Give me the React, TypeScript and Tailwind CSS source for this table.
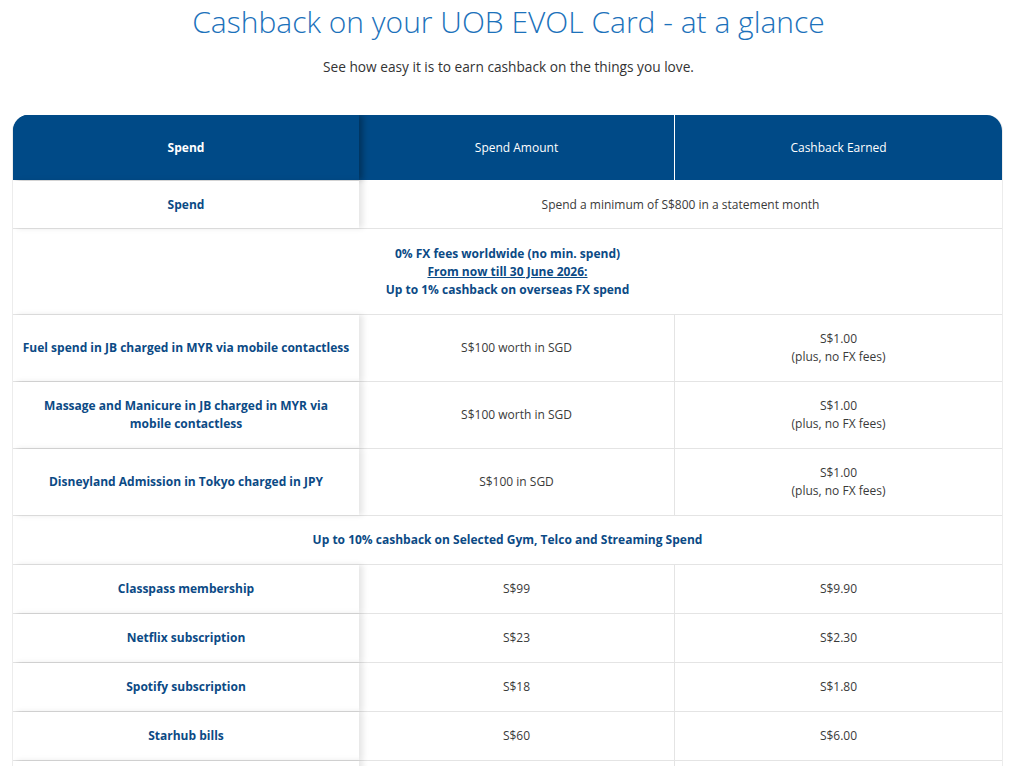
const font = { fontFamily: '"Open Sans", "Noto Sans", sans-serif' };

type Row =
  | { kind: 'split'; label: string; amount: string; earned: string[]; h: string }
  | { kind: 'wide'; label?: string; body: React.ReactNode; h: string };

const rows: Row[] = [
  {
    kind: 'wide',
    label: 'Spend',
    body: 'Spend a minimum of S$800 in a statement month',
    h: 'h-[49px] pt-[1px]',
  },
  {
    kind: 'wide',
    body: (
      <div className="font-bold text-[#0b4a85] leading-[18px]">
        <div>0% FX fees worldwide (no min. spend)</div>
        <div className="underline">From now till 30 June 2026:</div>
        <div>Up to 1% cashback on overseas FX spend</div>
      </div>
    ),
    h: 'h-[86px]',
  },
  {
    kind: 'split',
    label: 'Fuel spend in JB charged in MYR via mobile contactless',
    amount: 'S$100 worth in SGD',
    earned: ['S$1.00', '(plus, no FX fees)'],
    h: 'h-[67px]',
  },
  {
    kind: 'split',
    label: 'Massage and Manicure in JB charged in MYR via mobile contactless',
    amount: 'S$100 worth in SGD',
    earned: ['S$1.00', '(plus, no FX fees)'],
    h: 'h-[67px]',
  },
  {
    kind: 'split',
    label: 'Disneyland Admission in Tokyo charged in JPY',
    amount: 'S$100 in SGD',
    earned: ['S$1.00', '(plus, no FX fees)'],
    h: 'h-[67px]',
  },
  {
    kind: 'wide',
    body: (
      <div className="font-bold text-[#0b4a85]">
        Up to 10% cashback on Selected Gym, Telco and Streaming Spend
      </div>
    ),
    h: 'h-[49px]',
  },
  { kind: 'split', label: 'Classpass membership', amount: 'S$99', earned: ['S$9.90'], h: 'h-[49px]' },
  { kind: 'split', label: 'Netflix subscription', amount: 'S$23', earned: ['S$2.30'], h: 'h-[49px]' },
  { kind: 'split', label: 'Spotify subscription', amount: 'S$18', earned: ['S$1.80'], h: 'h-[49px]' },
  { kind: 'split', label: 'Starhub bills', amount: 'S$60', earned: ['S$6.00'], h: 'h-[49px]' },
];

function TableRow({ row }: { row: Row }) {
  if (row.kind === 'wide' && !row.label) {
    return (
      <div
        className={`${row.h} flex items-center justify-center border-b border-[#e4e4e4] text-center text-[12px]`}
      >
        {row.body}
      </div>
    );
  }
  if (row.kind === 'wide') {
    return (
      <div className={`${row.h} flex border-b border-[#e4e4e4] text-[12px]`}>
        <div className="relative z-10 flex w-[346px] items-center justify-center bg-white px-[9px] text-center font-bold text-[#0b4a85] shadow-[4px_0_6px_rgba(0,0,0,0.1)]">
          {row.label}
        </div>
        <div className="flex flex-1 items-center justify-center text-center text-[#3a3a3a]">
          {row.body}
        </div>
      </div>
    );
  }
  return (
    <div className={`${row.h} flex border-b border-[#e4e4e4] text-[12px]`}>
      <div className="relative z-10 flex w-[346px] items-center justify-center bg-white px-[9px] text-center font-bold leading-[18px] text-[#0b4a85] shadow-[4px_0_6px_rgba(0,0,0,0.1)]">
        {row.label}
      </div>
      <div className="flex w-[315px] items-center justify-center text-center text-[#3a3a3a]">
        {row.amount}
      </div>
      <div className="flex flex-1 flex-col items-center justify-center border-l border-[#e4e4e4] text-center leading-[18px] text-[#3a3a3a]">
        {row.earned.map((e) => (
          <div key={e}>{e}</div>
        ))}
      </div>
    </div>
  );
}

export default function App() {
  return (
    <div className="h-[766px] overflow-hidden bg-white" style={font}>
      <h1 className="pt-[2px] text-center text-[30px] font-light leading-[40px] text-[#1c72bb]">
        Cashback on your UOB EVOL Card - at a glance
      </h1>
      <p className="mt-[15px] text-center text-[13.7px] leading-[20px] text-[#333]">
        See how easy it is to earn cashback on the things you love.
      </p>

      <div className="ml-[12px] mt-[38px] w-[991px] overflow-hidden rounded-t-[16px] border-x border-[#ececec]">
        <div className="flex h-[65px] bg-[#004a87] text-[12px] text-white">
          <div className="relative z-10 flex w-[346px] items-center justify-center bg-[#004a87] font-bold shadow-[4px_0_6px_rgba(0,0,0,0.3)]">
            Spend
          </div>
          <div className="flex w-[315px] items-center justify-center">Spend Amount</div>
          <div className="flex flex-1 items-center justify-center border-l border-white">
            Cashback Earned
          </div>
        </div>
        {rows.map((r, i) => (
          <TableRow key={i} row={r} />
        ))}
        <div className="flex h-[49px]">
          <div className="relative z-10 w-[346px] bg-white shadow-[4px_0_6px_rgba(0,0,0,0.1)]" />
          <div className="w-[315px]" />
          <div className="flex-1 border-l border-[#e4e4e4]" />
        </div>
      </div>
    </div>
  );
}
